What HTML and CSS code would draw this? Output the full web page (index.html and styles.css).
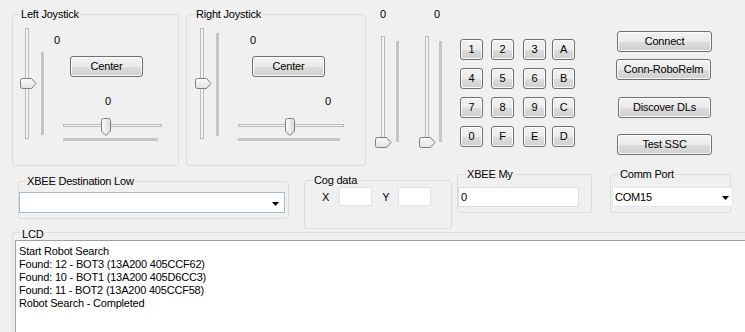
FILE: index.html
```html
<!DOCTYPE html>
<html>
<head>
<meta charset="utf-8">
<title>Robot Controller</title>
<link rel="stylesheet" href="styles.css">
</head>
<body>
<div class="form">
  <div class="top-row">
    <fieldset class="group joy joy-left">
      <legend>Left Joystick</legend>
      <div class="joy-body">
        <svg class="vslider vs-left" width="25" height="115" viewBox="0 0 25 115">
          <defs>
            <linearGradient id="thumbV" x1="0" y1="0" x2="0" y2="1"><stop offset="0" stop-color="#fdfdfd"/><stop offset="1" stop-color="#e2e2e2"/></linearGradient>
            <linearGradient id="thumbH" x1="0" y1="0" x2="1" y2="0"><stop offset="0" stop-color="#fdfdfd"/><stop offset="1" stop-color="#dadada"/></linearGradient>
          </defs>
          <rect x="6.5" y="1.5" width="3" height="110" fill="#f6f6f6" stroke="#b9b9b9"/>
          <rect x="22" y="25" width="3" height="83" fill="#c6c6c6"/>
          <path d="M3.5 51.5 H12.5 L17 56.5 L12.5 61.5 H3.5 Q1.5 61.5 1.5 59.5 V53.5 Q1.5 51.5 3.5 51.5 Z" fill="url(#thumbV)" stroke="#7e7e7e"/>
        </svg>
        <div class="joy-col">
          <span class="val v1">0</span>
          <button class="btn center-btn">Center</button>
          <span class="val v2">0</span>
          <svg class="hslider" width="101" height="27" viewBox="0 0 101 27">
            <rect x="1.5" y="7.5" width="98" height="2" fill="#f6f6f6" stroke="#b9b9b9"/>
            <rect x="1" y="21" width="95" height="3" fill="#c6c6c6"/>
            <path d="M39.5 3.5 Q39.5 1.5 41.5 1.5 H46.5 Q48.5 1.5 48.5 3.5 V14 L44 18.5 L39.5 14 Z" fill="url(#thumbH)" stroke="#7e7e7e"/>
          </svg>
        </div>
      </div>
    </fieldset>

    <fieldset class="group joy joy-right">
      <legend>Right Joystick</legend>
      <div class="joy-body">
        <svg class="vslider vs-right" width="25" height="115" viewBox="0 0 25 115">
          <rect x="6.5" y="1.5" width="3" height="110" fill="#f6f6f6" stroke="#b9b9b9"/>
          <rect x="22" y="6" width="3" height="103" fill="#c6c6c6"/>
          <path d="M3.5 51.5 H12.5 L17 56.5 L12.5 61.5 H3.5 Q1.5 61.5 1.5 59.5 V53.5 Q1.5 51.5 3.5 51.5 Z" fill="url(#thumbV)" stroke="#7e7e7e"/>
        </svg>
        <div class="joy-col">
          <span class="val v1">0</span>
          <button class="btn center-btn">Center</button>
          <span class="val v2">0</span>
          <svg class="hslider" width="108" height="27" viewBox="0 0 108 27">
            <rect x="1.5" y="7.5" width="105" height="2" fill="#f6f6f6" stroke="#b9b9b9"/>
            <rect x="1" y="21" width="102" height="3" fill="#c6c6c6"/>
            <path d="M48.5 3.5 Q48.5 1.5 50.5 1.5 H55.5 Q57.5 1.5 57.5 3.5 V14 L53 18.5 L48.5 14 Z" fill="url(#thumbH)" stroke="#7e7e7e"/>
          </svg>
        </div>
      </div>
    </fieldset>

    <div class="mid-slider ms1">
      <span class="val">0</span>
      <svg class="vslider" width="25" height="115" viewBox="0 0 25 115">
        <rect x="7.5" y="2.5" width="3" height="108" fill="#f6f6f6" stroke="#b9b9b9"/>
        <rect x="22" y="7" width="3" height="101" fill="#c6c6c6"/>
        <path d="M3.5 103.5 H12.5 L17 108.5 L12.5 113.5 H3.5 Q1.5 113.5 1.5 111.5 V105.5 Q1.5 103.5 3.5 103.5 Z" fill="url(#thumbV)" stroke="#7e7e7e"/>
      </svg>
    </div>
    <div class="mid-slider ms2">
      <span class="val">0</span>
      <svg class="vslider" width="25" height="115" viewBox="0 0 25 115">
        <rect x="7.5" y="2.5" width="3" height="108" fill="#f6f6f6" stroke="#b9b9b9"/>
        <rect x="21" y="7" width="3" height="101" fill="#c6c6c6"/>
        <path d="M3.5 103.5 H12.5 L17 108.5 L12.5 113.5 H3.5 Q1.5 113.5 1.5 111.5 V105.5 Q1.5 103.5 3.5 103.5 Z" fill="url(#thumbV)" stroke="#7e7e7e"/>
      </svg>
    </div>

    <div class="keypad">
      <button class="btn key">1</button>
      <button class="btn key">2</button>
      <button class="btn key">3</button>
      <button class="btn key">A</button>
      <button class="btn key">4</button>
      <button class="btn key">5</button>
      <button class="btn key">6</button>
      <button class="btn key">B</button>
      <button class="btn key">7</button>
      <button class="btn key">8</button>
      <button class="btn key">9</button>
      <button class="btn key">C</button>
      <button class="btn key">0</button>
      <button class="btn key">F</button>
      <button class="btn key">E</button>
      <button class="btn key">D</button>
    </div>

    <div class="actions">
      <button class="btn act a-connect">Connect</button>
      <button class="btn act a-robo">Conn-RoboRelm</button>
      <button class="btn act a-discover">Discover DLs</button>
      <button class="btn act a-test">Test SSC</button>
    </div>
  </div>

  <div class="bottom-row">
    <fieldset class="group g-dest">
      <legend>XBEE Destination Low</legend>
      <div class="combo combo-dest">
        <span class="combo-text"></span>
        <svg class="arrow" width="7" height="4" viewBox="0 0 7 4"><path d="M0 0 H7 L3.5 4 Z" fill="#000"/></svg>
      </div>
    </fieldset>

    <fieldset class="group g-cog">
      <legend>Cog data</legend>
      <div class="cog-row">
        <span class="axis ax-x">X</span>
        <span class="textbox tb-small tb-x"></span>
        <span class="axis ax-y">Y</span>
        <span class="textbox tb-small tb-y"></span>
      </div>
    </fieldset>

    <fieldset class="group g-my">
      <legend>XBEE My</legend>
      <div class="textbox tb-my">0</div>
    </fieldset>

    <fieldset class="group g-port">
      <legend>Comm Port</legend>
      <div class="combo combo-port">
        <span class="combo-text">COM15</span>
        <svg class="arrow" width="7" height="4" viewBox="0 0 7 4"><path d="M0 0 H7 L3.5 4 Z" fill="#000"/></svg>
      </div>
    </fieldset>
  </div>

  <fieldset class="group g-lcd">
    <legend>LCD</legend>
    <div class="lcd-box">
      <div>Start Robot Search</div>
      <div>Found: 12 - BOT3 (13A200 405CCF62)</div>
      <div>Found: 10 - BOT1 (13A200 405D6CC3)</div>
      <div>Found: 11 - BOT2 (13A200 405CCF58)</div>
      <div>Robot Search - Completed</div>
    </div>
  </fieldset>
</div>
</body>
</html>
```

FILE: styles.css
```css
* { box-sizing: border-box; }

html, body {
  margin: 0;
  padding: 0;
  background: #f0f0f0;
  overflow: hidden;
}

body {
  width: 745px;
  height: 332px;
  font-family: "Liberation Sans", Arial, sans-serif;
  font-size: 11px;
  line-height: 13px;
  letter-spacing: -0.2px;
  color: #000;
}

.form { width: 745px; height: 332px; overflow: hidden; }

svg { display: block; }

/* group boxes */
.group {
  margin: 0;
  padding: 0;
  min-width: 0;
  border: 1px solid #d9dde1;
  border-radius: 3px;
}

.group legend {
  margin-left: 7px;
  padding: 0 1px;
  line-height: 13px;
  font-size: 11px;
}

/* buttons */
.btn {
  display: flex;
  align-items: center;
  justify-content: center;
  margin: 0;
  padding: 0;
  height: 21px;
  border: 1px solid #707070;
  border-radius: 3px;
  background: linear-gradient(#f2f2f2 0%, #ebebeb 50%, #dddddd 51%, #cfcfcf 100%);
  box-shadow: inset 0 0 0 1px #fbfbfb;
  font-family: inherit;
  font-size: 11px;
  letter-spacing: -0.2px;
  line-height: 13px;
  color: #000;
}

.val { display: block; line-height: 13px; height: 13px; }

/* top row */
.top-row {
  display: flex;
  align-items: flex-start;
  height: 166px;
}

.joy {
  margin-top: 8px;
  height: 158px;
}

.joy-left { margin-left: 12px; width: 167px; }
.joy-right { margin-left: 7px; width: 180px; }
.joy-right legend { margin-left: 8px; }

.joy-body { display: flex; align-items: flex-start; }

.vslider { margin-top: 6px; }
.vs-left { margin-left: 6px; }
.vs-right { margin-left: 7px; }

.joy-col {
  display: flex;
  flex-direction: column;
  align-items: flex-start;
}

.joy-col .v1 { margin-top: 13px; }
.joy-col .center-btn { margin-top: 9px; width: 73px; }
.joy-col .v2 { margin-top: 18px; }
.joy-col .hslider { margin-top: 9px; margin-left: 18px; }

.joy-left .v1 { margin-left: 10px; }
.joy-left .center-btn { margin-left: 26px; }
.joy-left .v2 { margin-left: 61px; }

.joy-right .v1 { margin-left: 31px; }
.joy-right .center-btn { margin-left: 33px; }
.joy-right .v2 { margin-left: 106px; }

.mid-slider {
  display: flex;
  flex-direction: column;
  margin-top: 8px;
}
.mid-slider .vslider { margin-top: 13px; }
.ms1 { margin-left: 8px; }
.ms1 .val { margin-left: 6px; }
.ms2 { margin-left: 19px; }
.ms2 .val { margin-left: 16px; }

.keypad {
  display: grid;
  grid-template-columns: 31px 32px 29px 23px;
  grid-auto-rows: 21px;
  row-gap: 8px;
  margin-left: 17px;
  margin-top: 39px;
}
.key { width: 23px; }

.actions {
  display: flex;
  flex-direction: column;
  align-items: flex-start;
  margin-left: 41px;
  margin-top: 31px;
}
.act { width: 95px; }
.a-connect { margin-left: 1px; }
.a-robo { margin-top: 7px; }
.a-discover { margin-top: 17px; margin-left: 2px; width: 93px; }
.a-test { margin-top: 16px; margin-left: 1px; }

/* bottom row */
.bottom-row {
  display: flex;
  align-items: flex-start;
  height: 58px;
}

.g-dest { margin-left: 18px; margin-top: 9px; width: 271px; height: 44px; }
.g-cog { margin-left: 15px; margin-top: 8px; width: 148px; height: 55px; }
.g-cog legend { margin-left: 8px; }
.g-my { margin-left: 5px; margin-top: 2px; width: 135px; height: 45px; }
.g-my legend { margin-left: 8px; }
.g-port { margin-left: 18px; margin-top: 2px; width: 121px; height: 45px; }
.g-port legend { margin-left: 8px; }

.combo {
  display: flex;
  align-items: center;
  justify-content: space-between;
  background: #fff;
  border: 1px solid #abadb3;
}
.combo-dest {
  width: 266px;
  height: 21px;
  margin-top: 4px;
  border-color: #a7bcd4;
  padding-top: 2px;
}
.combo-dest .arrow { margin-right: 5px; }
.combo-port {
  width: 121px;
  height: 20px;
  margin-top: 6px;
  margin-left: 1px;
  border-color: #e3e6ea;
  padding-left: 2px;
}
.combo-port .arrow { margin-right: 3px; margin-top: 1px; }

.textbox {
  display: block;
  background: #fff;
  border: 1px solid #e2e3ea;
}

.cog-row { display: flex; align-items: flex-start; }
.axis { margin-top: 4px; }
.ax-x { margin-left: 17px; }
.ax-y { margin-left: 10px; }
.tb-small { width: 33px; height: 19px; }
.tb-x { margin-left: 10px; }
.tb-y { margin-left: 9px; }

.tb-my {
  width: 121px;
  height: 20px;
  margin-top: 6px;
  padding: 3px 0 0 2px;
  border-color: #d9dde3;
}

/* LCD: window edge cuts off its right and bottom sides */
.g-lcd {
  margin-left: 12px;
  width: 733px;
  height: 108px;
  border-right: none;
  border-bottom: none;
  border-radius: 3px 0 0 0;
}
.g-lcd legend { margin-left: 8px; padding-top: 4px; }
.lcd-box {
  margin-left: 2px;
  margin-top: -1px;
  width: 730px;
  height: 92px;
  background: #fff;
  border-top: 1px solid #a0a0a0;
  border-left: 1px solid #a0a0a0;
  padding: 4px 0 0 3px;
  line-height: 13px;
}
```
